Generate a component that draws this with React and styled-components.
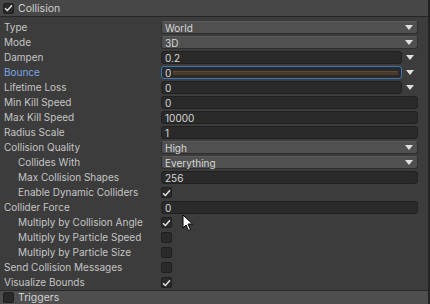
import React from "react";
import styled, { createGlobalStyle } from "styled-components";

const Global = createGlobalStyle`
  html, body { margin: 0; padding: 0; background: #3c3c3c; }
  body { font-family: Inter, "Noto Sans", "Liberation Sans", sans-serif; overflow: hidden; }
`;

const Frame = styled.div`
  position: relative;
  width: 430px;
  height: 304px;
  box-sizing: border-box;
  border-right: 2px solid #232323;
  background: #3c3c3c;
  display: flex;
  flex-direction: column;
  overflow: hidden;
`;

const SectionHeader = styled.div`
  display: flex;
  align-items: center;
  gap: 4px;
  height: ${(p) => p.$h}px;
  flex: none;
  box-sizing: border-box;
  padding-left: 3px;
  background: ${(p) => p.$bg};
  border-top: ${(p) => (p.$top ? "1px solid #2a2a2a" : "none")};
  border-bottom: ${(p) => (p.$bottom ? "1px solid #262626" : "none")};
  color: #d0d0d0;
  font-size: 10.5px;
`;

const Rows = styled.div`
  display: flex;
  flex-direction: column;
  padding-top: 3px;
  flex: 1;
`;

const Row = styled.div`
  display: grid;
  grid-template-columns: 161px 1fr;
  height: 15px;
  align-items: center;
  padding-right: 10px;
`;

const Label = styled.div`
  padding-left: ${(p) => (p.$indent ? 18 : 4)}px;
  color: ${(p) => (p.$active ? "#7aa5e6" : "#c4c4c4")};
  font-size: 10px;
  white-space: nowrap;
  line-height: 15px;
`;

const Dropdown = styled.div`
  height: 13px;
  box-sizing: border-box;
  background: #505050;
  border: 1px solid #2e2e2e;
  border-top-color: #5a5a5a;
  border-radius: 3px;
  display: flex;
  align-items: center;
  justify-content: space-between;
  padding: 0 4px 0 3px;
  color: #d6d6d6;
  font-size: 10px;
`;

const Input = styled.div`
  height: 13px;
  box-sizing: border-box;
  background: #2a2a2a;
  border: 1px solid ${(p) => (p.$focus ? "#3b78b8" : "#212121")};
  border-radius: 3px;
  display: flex;
  align-items: center;
  gap: 2px;
  padding: 0 3px;
  color: #d6d6d6;
  font-size: 10px;
  position: relative;
`;

const CurveLine = styled.div`
  flex: 1;
  height: 3px;
  background: #4b3a28;
  border-top: 1px solid #604a30;
`;

const CurveField = styled.div`
  display: grid;
  grid-template-columns: 1fr 16px;
  align-items: center;
`;

const ArrowCell = styled.div`
  display: flex;
  justify-content: center;
  align-items: center;
`;

const Check = styled.div`
  width: 11px;
  height: 11px;
  box-sizing: border-box;
  background: #2a2a2a;
  border: 1px solid #1f1f1f;
  border-radius: 2px;
  display: flex;
  align-items: center;
  justify-content: center;
`;

const Cursor = styled.svg`
  position: absolute;
  left: 182px;
  top: 214px;
`;

const Arrow = () => (
  <svg width="8" height="5" viewBox="0 0 8 5">
    <path d="M0 0 H8 L4 5 Z" fill="#e0e0e0" />
  </svg>
);

const Tick = () => (
  <svg width="9" height="8" viewBox="0 0 9 8">
    <path d="M1 4.2 L3.4 6.5 L8 1.2" stroke="#e6e6e6" strokeWidth="1.4" fill="none" />
  </svg>
);

const CheckBox = ({ on }) => <Check>{on && <Tick />}</Check>;

const rows = [
  { label: "Type", kind: "drop", value: "World" },
  { label: "Mode", kind: "drop", value: "3D" },
  { label: "Dampen", kind: "curve", value: "0.2" },
  { label: "Bounce", kind: "curve", value: "0", active: true },
  { label: "Lifetime Loss", kind: "curve", value: "0" },
  { label: "Min Kill Speed", kind: "input", value: "0" },
  { label: "Max Kill Speed", kind: "input", value: "10000" },
  { label: "Radius Scale", kind: "input", value: "1" },
  { label: "Collision Quality", kind: "drop", value: "High" },
  { label: "Collides With", kind: "drop", value: "Everything", indent: true },
  { label: "Max Collision Shapes", kind: "input", value: "256", indent: true },
  { label: "Enable Dynamic Colliders", kind: "check", value: true, indent: true },
  { label: "Collider Force", kind: "input", value: "0" },
  { label: "Multiply by Collision Angle", kind: "check", value: true, indent: true },
  { label: "Multiply by Particle Speed", kind: "check", value: false, indent: true },
  { label: "Multiply by Particle Size", kind: "check", value: false, indent: true },
  { label: "Send Collision Messages", kind: "check", value: false },
  { label: "Visualize Bounds", kind: "check", value: true },
];

const Field = ({ r }) => {
  if (r.kind === "drop")
    return (
      <Dropdown>
        <span>{r.value}</span>
        <Arrow />
      </Dropdown>
    );
  if (r.kind === "curve")
    return (
      <CurveField>
        <Input $focus={r.active}>
          <span>{r.value}</span>
          {r.active && <CurveLine />}
        </Input>
        <ArrowCell>
          <Arrow />
        </ArrowCell>
      </CurveField>
    );
  if (r.kind === "input") return <Input>{r.value}</Input>;
  return <CheckBox on={r.value} />;
};

export default function App() {
  return (
    <>
      <Global />
      <Frame>
        <SectionHeader $h={17} $bg="#474747" $bottom>
          <CheckBox on />
          <span>Collision</span>
        </SectionHeader>
        <Rows>
          {rows.map((r) => (
            <Row key={r.label}>
              <Label $indent={r.indent} $active={r.active}>
                {r.label}
              </Label>
              <Field r={r} />
            </Row>
          ))}
        </Rows>
        <SectionHeader $h={14} $bg="#4e4e4e" $top>
          <CheckBox />
          <span>Triggers</span>
        </SectionHeader>
        <Cursor width="12" height="18" viewBox="0 0 12 18">
          <path d="M1 1 L1 14 L4 11 L6.5 16.5 L8.5 15.5 L6 10 L10.5 10 Z" fill="#ffffff" stroke="#000" strokeWidth="1" />
        </Cursor>
      </Frame>
    </>
  );
}
